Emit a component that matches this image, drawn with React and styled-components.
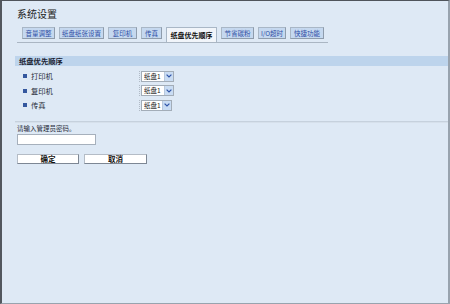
import React from 'react';
import styled, { createGlobalStyle } from 'styled-components';

const GlobalStyle = createGlobalStyle`
  html, body {
    margin: 0;
    padding: 0;
    background: #dee9f5;
  }
  * { box-sizing: border-box; }
`;

const tabs = [
  { label: '音量调整', w: 33 },
  { label: '纸盘纸张设置', w: 45 },
  { label: '复印机', w: 29 },
  { label: '传真', w: 21 },
  { label: '纸盘优先顺序', w: 51, active: true },
  { label: '节省碳粉', w: 33 },
  { label: 'I/O超时', w: 28 },
  { label: '快捷功能', w: 34 },
];

const rows = [
  { label: '打印机', w: 33 },
  { label: '复印机', w: 33 },
  { label: '传真', w: 31 },
];

export default function App() {
  return (
    <>
      <GlobalStyle />
      <Frame>
        <Title>系统设置</Title>
        <TabBar>
          {tabs.map((t) => (
            <Tab key={t.label} w={t.w} active={t.active}>
              {t.label}
            </Tab>
          ))}
        </TabBar>

        <SectionBar>纸盘优先顺序</SectionBar>
        <Rows>
          {rows.map((r) => (
            <Row key={r.label}>
              <Label>
                <Bullet />
                {r.label}
              </Label>
              <Cell>
                <Select w={r.w}>
                  <SelectText>纸盘1</SelectText>
                  <Arrow>
                    <svg width="6" height="4" viewBox="0 0 6 4">
                      <path d="M0.6 0.6 L3 3 L5.4 0.6" fill="none" stroke="#2f54a8" strokeWidth="1.2" />
                    </svg>
                  </Arrow>
                </Select>
              </Cell>
            </Row>
          ))}
        </Rows>

        <Divider />
        <PassLabel>请输入管理员密码。</PassLabel>
        <PassInput />
        <Buttons>
          <Button w={62}>确定</Button>
          <Button w={63}>取消</Button>
        </Buttons>
      </Frame>
    </>
  );
}

const Frame = styled.div`
  width: 450px;
  height: 304px;
  background: #dee9f5;
  border-top: 1px solid #4f545b;
  border-left: 2px solid #52575e;
  border-right: 2px solid #98a3ae;
  border-bottom: 1px solid #98a3ae;
  display: flex;
  flex-direction: column;
  font-family: "Noto Sans CJK SC", "Liberation Sans", sans-serif;
  color: #1a1a1a;
  overflow: hidden;
`;

const Title = styled.div`
  padding: 6px 0 0 15px;
  height: 19px;
  line-height: 13px;
  font-size: 10px;
  color: #222;
`;

const TabBar = styled.div`
  margin: 7px 0 0 15px;
  width: 311px;
  height: 16px;
  padding-left: 5px;
  display: flex;
  align-items: flex-start;
  gap: 4px;
  border-bottom: 1px solid #aab6c3;
`;

const Tab = styled.div`
  width: ${({ w }) => w}px;
  height: ${({ active }) => (active ? 15 : 12)}px;
  background: ${({ active }) => (active ? '#f1f5fa' : '#c5d8ef')};
  border: 1px solid #a9b7c6;
  border-right-color: ${({ active }) => (active ? '#a9b7c6' : '#8e9cac')};
  border-bottom: ${({ active }) => (active ? 'none' : '1px solid #8e9cac')};
  color: ${({ active }) => (active ? '#111' : '#2f4fa6')};
  font-weight: ${({ active }) => (active ? 700 : 400)};
  font-size: ${({ active }) => (active ? 7 : 6.5)}px;
  line-height: ${({ active }) => (active ? 14 : 10)}px;
  text-align: center;
  white-space: nowrap;
`;

const SectionBar = styled.div`
  margin: 13px 0 0 13px;
  height: 10px;
  background: #bdd4ec;
  padding-left: 4px;
  font-size: 7.3px;
  font-weight: 700;
  line-height: 10px;
  color: #1a2230;
`;

const Rows = styled.div`
  margin: 3px 0 0 13px;
  display: flex;
  flex-direction: column;
`;

const Row = styled.div`
  height: 14.5px;
  display: flex;
  align-items: center;
  padding-left: 8px;
`;

const Label = styled.div`
  width: 116px;
  display: flex;
  align-items: center;
  gap: 4px;
  font-size: 7.3px;
  color: #1f2a38;
`;

const Bullet = styled.span`
  width: 4px;
  height: 4px;
  background: #34579e;
`;

const Cell = styled.div`
  height: 11px;
  padding-left: 1px;
  border-left: 1px dotted #b0bac6;
  display: flex;
  align-items: center;
`;

const Select = styled.div`
  width: ${({ w }) => w}px;
  height: 11px;
  display: flex;
  background: #fff;
  border: 1px solid #a3adb8;
`;

const SelectText = styled.div`
  flex: 1;
  font-size: 6.5px;
  line-height: 9px;
  padding-left: 2px;
  color: #222;
`;

const Arrow = styled.div`
  width: 9px;
  background: #c9dcf3;
  border-left: 1px solid #b8c8dc;
  display: flex;
  align-items: center;
  justify-content: center;
`;

const Divider = styled.div`
  margin: 8px 0 0 13px;
  height: 2px;
  border-top: 1px solid #c6d1dd;
  border-bottom: 1px solid #d6e0eb;
`;

const PassLabel = styled.div`
  margin: 1px 0 0 15px;
  font-size: 6.5px;
  line-height: 9px;
  color: #1f2a38;
`;

const PassInput = styled.div`
  margin: 1px 0 0 15px;
  width: 79px;
  height: 11px;
  background: #fff;
  border: 1px solid #a6b0bc;
`;

const Buttons = styled.div`
  margin: 9px 0 0 15px;
  display: flex;
  gap: 5px;
`;

const Button = styled.div`
  width: ${({ w }) => w}px;
  height: 10px;
  background: #fff;
  border: 1px solid #b4bcc6;
  border-right-color: #7d8794;
  border-bottom-color: #7d8794;
  font-size: 7.5px;
  font-weight: 700;
  line-height: 8px;
  text-align: center;
  color: #111;
`;
